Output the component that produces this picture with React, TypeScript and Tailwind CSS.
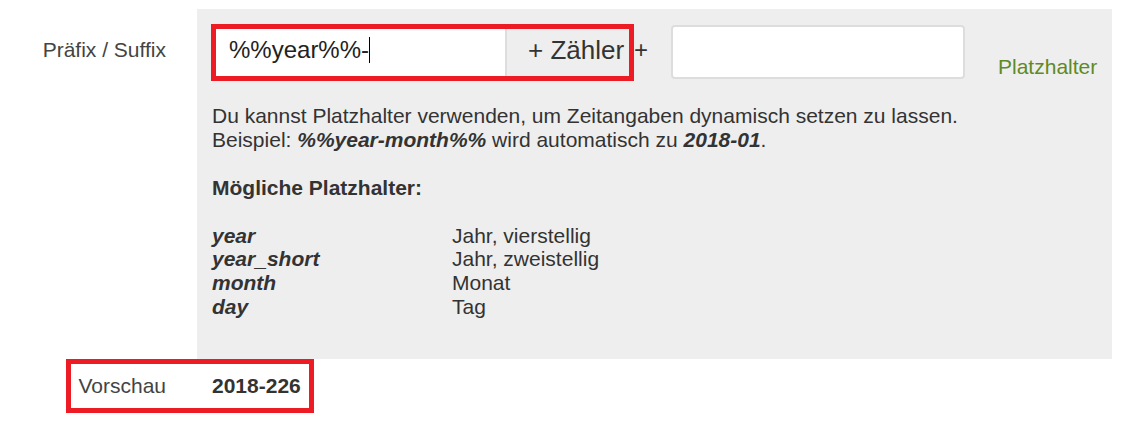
export default function App() {
  const rows: [string, string][] = [
    ["year", "Jahr, vierstellig"],
    ["year_short", "Jahr, zweistellig"],
    ["month", "Monat"],
    ["day", "Tag"],
  ];
  return (
    <div
      className="w-[1143px] h-[430px] bg-white text-[21px] leading-[23.9px] text-[#333]"
      style={{ fontFamily: '"Liberation Sans", Arial, sans-serif' }}
    >
      <div className="flex pt-[9px]">
        <div className="w-[197px] shrink-0 pr-[31px] pt-[29px] text-right leading-[24px] text-[#444]">
          Präfix / Suffix
        </div>
        <div className="w-[915px] bg-[#eeeeee] pl-[15px] pt-[15px] pb-[40px]">
          <div className="-ml-px flex items-start">
            <div className="flex h-[57px] w-[423px] border-[5px] border-[#ed1c24]">
              <div className="flex w-[289px] items-center bg-white pl-[13px] pb-[5px] text-[24px] leading-[28px] text-[#222]">
                <span>%%year%%-</span>
                <span className="h-[26px] w-px bg-black" />
              </div>
              <div className="flex flex-1 items-center border-l-2 border-[#dddddd] bg-[#eeeeee] pl-[21px] pb-[6px] text-[26px] leading-[28px] text-[#333]">
                + Zähler
              </div>
            </div>
            <div className="flex h-[57px] items-center pb-[6px] text-[24px] leading-[28px] text-[#333]">
              +
            </div>
            <div className="ml-[23px] mt-px h-[54px] w-[294px] rounded-[4px] border-2 border-[#dddddd] bg-white" />
            <div className="ml-[33px] mt-[31px] leading-[24px] text-[#5e8a26]">Platzhalter</div>
          </div>
          <div className="mt-[23px]">
            <div>Du kannst Platzhalter verwenden, um Zeitangaben dynamisch setzen zu lassen.</div>
            <div>
              Beispiel: <b className="italic">%%year-month%%</b> wird automatisch zu{" "}
              <b className="italic">2018-01</b>.
            </div>
            <div className="h-[23.9px]" />
            <div className="font-bold">Mögliche Platzhalter:</div>
            <div className="h-[23.9px]" />
            <div>
              {rows.map(([k, v]) => (
                <div key={k} className="flex">
                  <div className="w-[240px] font-bold italic">{k}</div>
                  <div>{v}</div>
                </div>
              ))}
            </div>
          </div>
        </div>
      </div>
      <div className="ml-[66px] flex h-[54px] w-[248px] items-center border-[5px] border-[#ed1c24]">
        <div className="w-[126px] pr-[31px] text-right text-[#444]">Vorschau</div>
        <div className="pl-[15px] font-bold">2018-226</div>
      </div>
    </div>
  );
}
